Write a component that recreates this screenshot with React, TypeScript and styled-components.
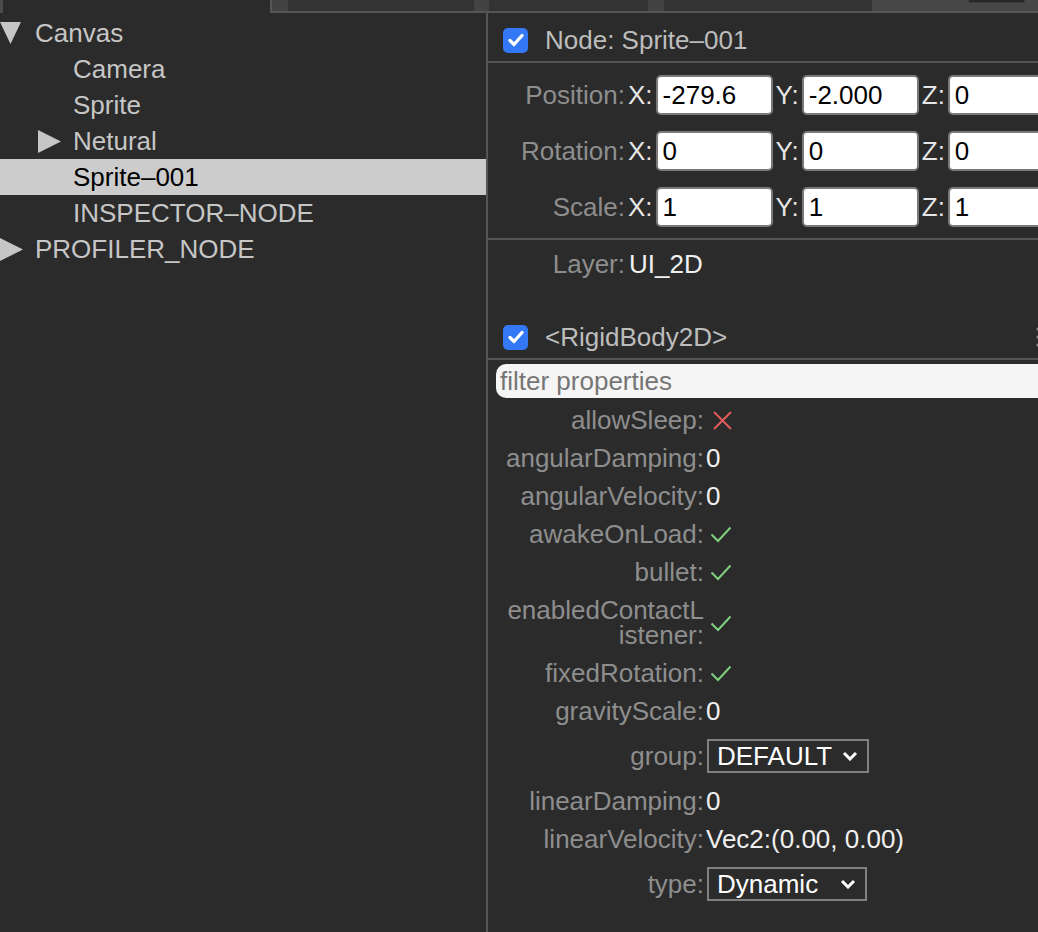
import React from "react";
import styled, { createGlobalStyle } from "styled-components";

const GlobalStyle = createGlobalStyle`
  html, body {
    margin: 0;
    padding: 0;
    background: #2b2b2b;
    overflow: hidden;
  }
  body {
    font-family: "Liberation Sans", Arial, sans-serif;
    font-size: 26px;
  }
`;

type Tone = "edge" | "tab" | "tool";

interface TreeNode {
  name: string;
  depth: number;
  arrow?: "open" | "closed";
  selected?: boolean;
}

const treeNodes: TreeNode[] = [
  { name: "Canvas", depth: 0, arrow: "open" },
  { name: "Camera", depth: 1 },
  { name: "Sprite", depth: 1 },
  { name: "Netural", depth: 1, arrow: "closed" },
  { name: "Sprite\u2013001", depth: 1, selected: true },
  { name: "INSPECTOR\u2013NODE", depth: 1 },
  { name: "PROFILER_NODE", depth: 0, arrow: "closed" },
];

const vectorRows = [
  { label: "Position", values: ["-279.6", "-2.000", "0"] },
  { label: "Rotation", values: ["0", "0", "0"] },
  { label: "Scale", values: ["1", "1", "1"] },
];

type PropValue =
  | { kind: "text"; text: string }
  | { kind: "bool"; on: boolean }
  | { kind: "select"; text: string; width: number };

const rigidProps: { label: React.ReactNode; value: PropValue }[] = [
  { label: "allowSleep:", value: { kind: "bool", on: false } },
  { label: "angularDamping:", value: { kind: "text", text: "0" } },
  { label: "angularVelocity:", value: { kind: "text", text: "0" } },
  { label: "awakeOnLoad:", value: { kind: "bool", on: true } },
  { label: "bullet:", value: { kind: "bool", on: true } },
  {
    label: (
      <>
        enabledContactL
        <wbr />
        istener:
      </>
    ),
    value: { kind: "bool", on: true },
  },
  { label: "fixedRotation:", value: { kind: "bool", on: true } },
  { label: "gravityScale:", value: { kind: "text", text: "0" } },
  { label: "group:", value: { kind: "select", text: "DEFAULT", width: 162 } },
  { label: "linearDamping:", value: { kind: "text", text: "0" } },
  { label: "linearVelocity:", value: { kind: "text", text: "Vec2:(0.00, 0.00)" } },
  { label: "type:", value: { kind: "select", text: "Dynamic", width: 160 } },
];

export default function App() {
  return (
    <>
      <GlobalStyle />
      <Screen>
        <TopStrip>
          <StripLead />
          <StripTabs>
            <StripCell $tone="edge" $w={16} />
            <StripCell $tone="tab" $w={186} />
            <StripCell $tone="edge" $w={15} />
            <StripCell $tone="tab" $w={159} />
            <StripCell $tone="edge" $w={16} />
            <StripCell $tone="tab" $w={208} />
            <StripCell $tone="tool">
              <StripButton />
            </StripCell>
          </StripTabs>
        </TopStrip>
        <Main>
          <TreePanel>
            {treeNodes.map((node) => (
              <TreeRow key={node.name} $depth={node.depth} $selected={!!node.selected}>
                <ArrowSlot>
                  {node.arrow === "open" && (
                    <svg width="21" height="22" viewBox="0 0 21 22">
                      <polygon points="0,0 21,0 10.5,22" fill="#c6c6c6" />
                    </svg>
                  )}
                  {node.arrow === "closed" && (
                    <svg width="23" height="23" viewBox="0 0 23 23">
                      <polygon points="0,0 23,11.5 0,23" fill="#c6c6c6" />
                    </svg>
                  )}
                </ArrowSlot>
                {node.name}
              </TreeRow>
            ))}
          </TreePanel>
          <InspectorPanel>
            <InspectorBody>
              <SectionHeader $bordered>
                <CheckBox />
                <HeaderTitle>Node: Sprite{"\u2013"}001</HeaderTitle>
              </SectionHeader>
              <TransformSection>
                {vectorRows.map((row) => (
                  <VectorRow key={row.label}>
                    <FieldLabel>{row.label}:</FieldLabel>
                    {["X", "Y", "Z"].map((axis, i) => (
                      <React.Fragment key={axis}>
                        <AxisLabel>{axis}:</AxisLabel>
                        <NumberInput readOnly defaultValue={row.values[i]} />
                      </React.Fragment>
                    ))}
                  </VectorRow>
                ))}
              </TransformSection>
              <LayerSection>
                <LayerRow>
                  <FieldLabel>Layer:</FieldLabel>
                  <LayerValue>UI_2D</LayerValue>
                </LayerRow>
              </LayerSection>
              <SectionHeader $bordered>
                <CheckBox />
                <HeaderTitle>&lt;RigidBody2D&gt;</HeaderTitle>
                <MoreDots width="6" height="24" viewBox="0 0 6 24">
                  <circle cx="3" cy="4" r="1.6" fill="#8a8a8a" />
                  <circle cx="3" cy="12" r="1.6" fill="#8a8a8a" />
                  <circle cx="3" cy="20" r="1.6" fill="#8a8a8a" />
                </MoreDots>
              </SectionHeader>
              <FilterWrap>
                <FilterInput placeholder="filter properties" />
              </FilterWrap>
              <PropList>
                {rigidProps.map((p, idx) => (
                  <PropRow key={idx} $tall={p.value.kind === "select"}>
                    <PropLabel>{p.label}</PropLabel>
                    {p.value.kind === "text" && <PropValueText>{p.value.text}</PropValueText>}
                    {p.value.kind === "bool" &&
                      (p.value.on ? (
                        <BoolIcon width="22" height="17" viewBox="0 0 22 17" $gap={6}>
                          <path d="M1.5 8.5 L8 15 L20.5 1.5" fill="none" stroke="#7fd07f" strokeWidth="2" />
                        </BoolIcon>
                      ) : (
                        <BoolIcon width="19" height="19" viewBox="0 0 19 19" $gap={9}>
                          <path d="M1 1 L18 18 M18 1 L1 18" fill="none" stroke="#e25b5b" strokeWidth="2" />
                        </BoolIcon>
                      ))}
                    {p.value.kind === "select" && (
                      <SelectBox $width={p.value.width}>
                        {p.value.text}
                        <svg width="16" height="10" viewBox="0 0 16 10">
                          <path d="M2 2 L8 8 L14 2" fill="none" stroke="#ffffff" strokeWidth="3" />
                        </svg>
                      </SelectBox>
                    )}
                  </PropRow>
                ))}
              </PropList>
            </InspectorBody>
          </InspectorPanel>
        </Main>
      </Screen>
    </>
  );
}

const CheckBox = () => (
  <CheckSquare>
    <svg width="16" height="14" viewBox="0 0 16 14">
      <path d="M2 7.5 L6 11.5 L14 2.5" fill="none" stroke="#ffffff" strokeWidth="3.2" strokeLinecap="round" strokeLinejoin="round" />
    </svg>
  </CheckSquare>
);

const Screen = styled.div`
  width: 1038px;
  height: 932px;
  display: flex;
  flex-direction: column;
  background: #2b2b2b;
  overflow: hidden;
`;

const TopStrip = styled.div`
  display: flex;
  height: 13px;
  flex-shrink: 0;
`;

const StripLead = styled.div`
  width: 267px;
  border-left: 3px solid #4c4c4c;
`;

const StripTabs = styled.div`
  flex: 1;
  display: flex;
  border-left: 2px solid #555;
  border-bottom: 2px solid #555;
`;

const StripCell = styled.div<{ $w?: number; $tone: Tone }>`
  width: ${(p) => (p.$w ? `${p.$w}px` : "auto")};
  flex: ${(p) => (p.$w ? "none" : "1")};
  background: ${(p) => (p.$tone === "edge" ? "#434343" : p.$tone === "tab" ? "#333333" : "#474747")};
  display: flex;
  padding-left: ${(p) => (p.$tone === "tool" ? "96px" : "0")};
`;

const StripButton = styled.div`
  width: 55px;
  height: 2px;
  background: #262626;
  border: 1px solid #3a3a3a;
  border-top: none;
  border-radius: 0 0 6px 6px;
`;

const Main = styled.div`
  flex: 1;
  display: flex;
  min-height: 0;
`;

const TreePanel = styled.div`
  width: 486px;
  flex-shrink: 0;
  padding-top: 2px;
`;

const TreeRow = styled.div<{ $depth: number; $selected: boolean }>`
  height: 36px;
  display: flex;
  align-items: center;
  padding-left: ${(p) => p.$depth * 38}px;
  background: ${(p) => (p.$selected ? "#cccccc" : "transparent")};
  color: ${(p) => (p.$selected ? "#000000" : "#c6c6c6")};
  white-space: nowrap;
`;

const ArrowSlot = styled.span`
  width: 35px;
  flex-shrink: 0;
  display: flex;
  align-items: center;
`;

const InspectorPanel = styled.div`
  flex: 1;
  border-left: 2px solid #555;
  overflow: hidden;
`;

const InspectorBody = styled.div`
  width: 560px;
`;

const SectionHeader = styled.div<{ $bordered?: boolean }>`
  height: 48px;
  box-sizing: border-box;
  display: flex;
  align-items: center;
  padding: 6px 7px 0 15px;
  border-bottom: ${(p) => (p.$bordered ? "2px solid #555" : "none")};
  box-sizing: content-box;
  height: 42px;
`;

const CheckSquare = styled.span`
  width: 25px;
  height: 25px;
  border-radius: 5px;
  background: #3478f6;
  display: flex;
  align-items: center;
  justify-content: center;
  flex-shrink: 0;
`;

const HeaderTitle = styled.span`
  margin-left: 17px;
  color: #bdbdbd;
  white-space: nowrap;
`;

const MoreDots = styled.svg`
  margin-left: auto;
`;

const TransformSection = styled.div`
  display: flex;
  flex-direction: column;
  gap: 16px;
  padding: 12px 0 11px;
  border-bottom: 2px solid #555;
`;

const VectorRow = styled.div`
  display: flex;
  align-items: center;
  white-space: nowrap;
`;

const FieldLabel = styled.span`
  width: 137px;
  flex-shrink: 0;
  text-align: right;
  color: #8e8e8e;
`;

const AxisLabel = styled.span`
  padding: 0 3px;
  color: #e6e6e6;
`;

const NumberInput = styled.input`
  width: 117px;
  height: 40px;
  flex-shrink: 0;
  box-sizing: border-box;
  border: 2px solid #7a7a7a;
  border-radius: 5px;
  background: #ffffff;
  color: #000000;
  font: inherit;
  padding: 0 5px;
  outline: none;
`;

const LayerSection = styled.div`
  padding: 6px 0 28px;
`;

const LayerRow = styled.div`
  height: 36px;
  display: flex;
  align-items: center;
`;

const LayerValue = styled.span`
  margin-left: 4px;
  color: #f0f0f0;
`;

const FilterWrap = styled.div`
  padding: 4px 0 4px 8px;
`;

const FilterInput = styled.input`
  width: 100%;
  height: 34px;
  box-sizing: border-box;
  border: none;
  border-radius: 10px;
  background: #f5f5f5;
  font: inherit;
  padding: 0 4px;
  outline: none;
  &::placeholder {
    color: #757575;
  }
`;

const PropList = styled.div`
  display: flex;
  flex-direction: column;
`;

const PropRow = styled.div<{ $tall: boolean }>`
  display: flex;
  align-items: center;
  padding: ${(p) => (p.$tall ? "8px 0 10px" : "6px 0 7px")};
`;

const PropLabel = styled.span`
  width: 206px;
  margin-left: 10px;
  flex-shrink: 0;
  text-align: right;
  line-height: 25px;
  color: #8e8e8e;
`;

const PropValueText = styled.span`
  margin-left: 2px;
  line-height: 25px;
  color: #f0f0f0;
  white-space: nowrap;
`;

const BoolIcon = styled.svg<{ $gap: number }>`
  margin-left: ${(p) => p.$gap}px;
  flex-shrink: 0;
`;

const SelectBox = styled.span<{ $width: number }>`
  margin-left: 3px;
  width: ${(p) => p.$width}px;
  height: 34px;
  box-sizing: border-box;
  border: 2px solid #808080;
  display: flex;
  align-items: center;
  justify-content: space-between;
  padding: 0 9px 0 8px;
  color: #ffffff;
  white-space: nowrap;
`;
